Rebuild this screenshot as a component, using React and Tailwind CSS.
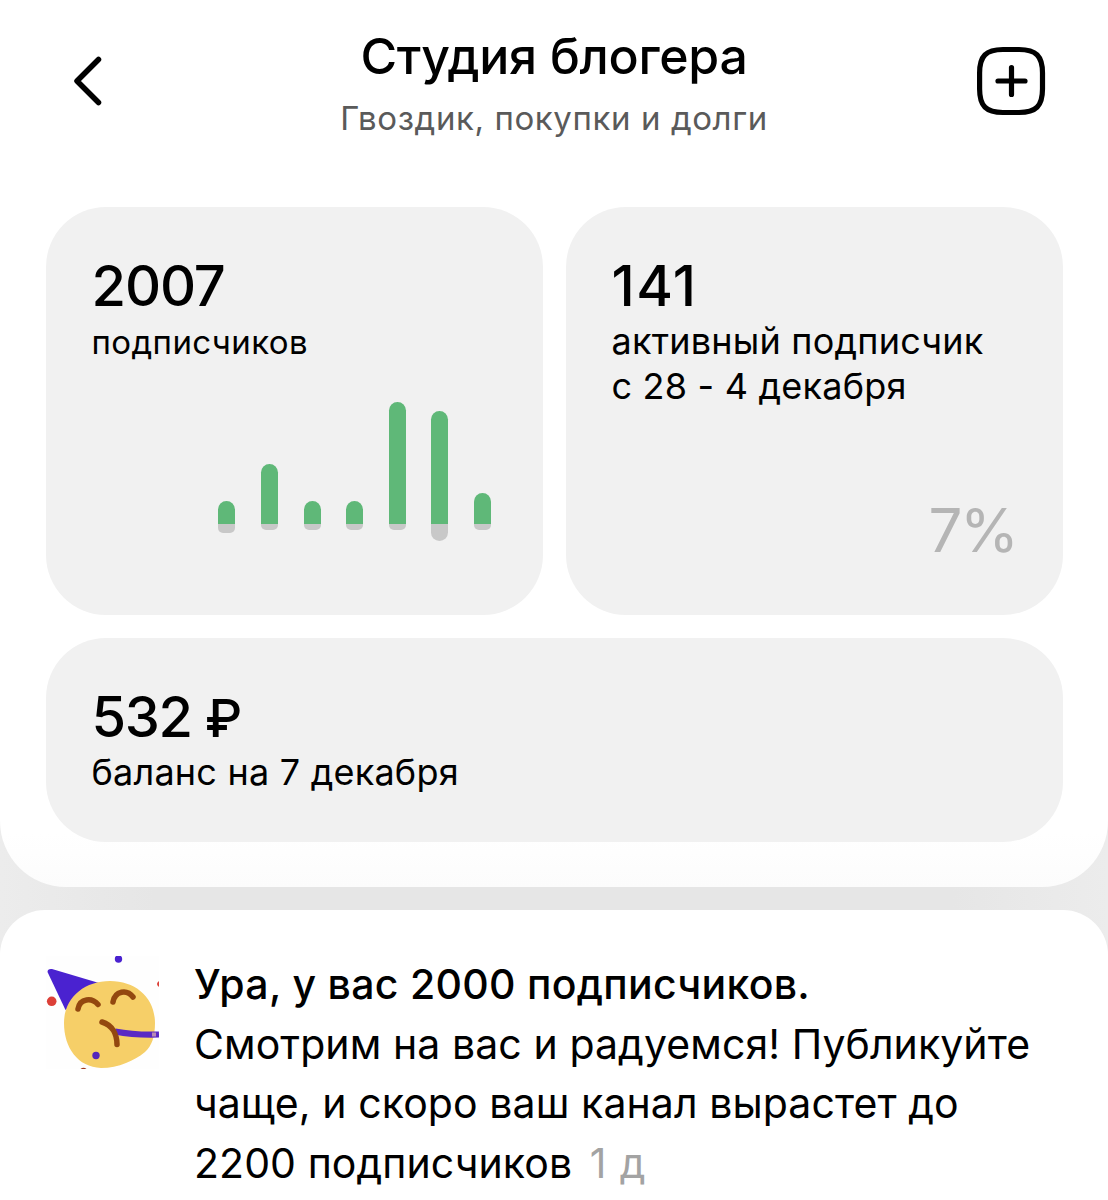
const days = [
  { up: 23, down: 9 },
  { up: 60, down: 6 },
  { up: 23, down: 6 },
  { up: 23, down: 6 },
  { up: 122, down: 6 },
  { up: 113, down: 17 },
  { up: 31, down: 6 },
];

const SubscribersChart = () => (
  <div className="flex gap-[25.6px] h-[140px] ml-auto mr-[5.5px]">
    {days.map((day, i) => (
      <div key={i} className="w-[17px] flex flex-col">
        <div className="h-[122px] flex items-end">
          <div className="w-full rounded-t-[8.5px] bg-[#5fb878]" style={{ height: day.up }}></div>
        </div>
        <div
          className={`w-full bg-[#c8c8c8] ${day.down > 12 ? 'rounded-b-[8.5px]' : 'rounded-b-[5px]'}`}
          style={{ height: day.down }}
        ></div>
      </div>
    ))}
  </div>
);

const PartyFace = () => (
  <svg viewBox="0 0 113 113" className="w-[113px] h-[113px] mt-px shrink-0" fill="none">
    <rect width="113" height="113" fill="#fefefe" />
    <path d="M1.500 16 Q1.500 12.500 6 13 L53 27 L19.500 54 Z" fill="#4a22d0" />
    <path
      d="M64 25 C90 25 109 42 109 67 C109 80 106 90 99 96 C93 101 87 104 80 107 C72 110.500 64 112 55 112 C32 111 18 92 18 67 C18 42 38 25 64 25 Z"
      fill="#f6cf68"
    />
    <g stroke="#93480f" strokeWidth="5.500" strokeLinecap="round">
      <path d="M32 53 C34 42 46 41.500 52 48.500" />
      <path d="M67 46 C69 34.500 81 33 87 41" />
    </g>
    <path d="M69 75.500 C82 78 98 79 113 78.500" stroke="#5a28c4" strokeWidth="6.200" />
    <rect x="106" y="76.500" width="4" height="4" fill="#b98ab5" />
    <path d="M56 66 C66 69 71 78 71 88.500" stroke="#93480f" strokeWidth="5.500" strokeLinecap="round" />
    <circle cx="72.500" cy="3" r="3.700" fill="#4a22d0" />
    <circle cx="50" cy="99.500" r="3.700" fill="#5526bb" />
    <circle cx="5.700" cy="45.300" r="4.800" fill="#dc4038" />
    <path d="M113 25 Q109 28 113 31 Z" fill="#dc4038" />
    <path d="M34.500 113 Q37.500 110.500 40.500 113 Z" fill="#a03a20" />
  </svg>
);

const Card = ({ value, label, valueClass = '', labelClass = 'text-[36px] tracking-[0.006em]', className = '', children }) => (
  <div className={`bg-[#f1f1f1] rounded-[60px] px-[46px] pt-[47px] flex flex-col ${className}`}>
    <div className={`h-16 text-[56px] leading-[64px] font-medium ${valueClass}`}>{value}</div>
    <div className={`leading-[45px] whitespace-pre-line mt-px ${labelClass}`}>{label}</div>
    {children}
  </div>
);

const App = () => {
  return (
    <div className="w-[1108px] h-[1200px] overflow-hidden bg-[linear-gradient(to_right,#ececec,#e6e6e6_14%,#e6e6e6_86%,#ececec)] font-['Inter',sans-serif] text-black">
      <div className="h-[887px] bg-linear-to-b from-white from-94% to-[#fcfcfc] rounded-b-[66px] px-[45.5px]">
        <header className="h-[207px] flex justify-between">
          <button className="w-[86px] h-[162px] pl-[27px] flex items-center">
            <svg width="30" height="50" viewBox="0 0 30 50" fill="none" stroke="currentColor" strokeWidth="5.500" strokeLinecap="round" strokeLinejoin="round">
              <path d="M25.500 3.500 L4 25 L25.500 46.500" />
            </svg>
          </button>
          <div className="pt-[26px] text-center whitespace-nowrap">
            <h1 className="text-[50px] leading-[60px] font-medium tracking-[-0.006em]">Студия блогера</h1>
            <p className="mt-3 text-[33px] leading-10 tracking-[0.018em] text-[#5a5a5a]">Гвоздик, покупки и долги</p>
          </div>
          <button className="w-[86px] h-[162px] flex items-center">
            <svg width="70" height="70" viewBox="0 0 70 70" fill="none" stroke="currentColor" strokeWidth="5.200" strokeLinecap="round">
              <path d="M26 3.500 H42 C59 3.500 65.500 10 65.500 27 V43 C65.500 60 59 66.500 42 66.500 H26 C9 66.500 2.600 60 2.600 43 V27 C2.600 10 9 3.500 26 3.500 Z" />
              <path d="M34.500 21.500 V48.500 M21 35 H48" />
            </svg>
          </button>
        </header>

        <div className="grid grid-cols-2 gap-[23px]">
          <Card
            value="2007"
            label="подписчиков"
            valueClass="tracking-[-0.02em]"
            labelClass="text-[33px] tracking-[0.012em] pt-px"
            className="h-[408px]"
          >
            <div className="flex mt-[37px]">
              <SubscribersChart />
            </div>
          </Card>
          <Card value="141" label={'активный подписчик\nс 28 - 4 декабря'} valueClass="tracking-[0.025em]" className="h-[408px]">
            <div className="mt-[83px] text-right text-[60px] leading-[76px] tracking-[-0.04em] text-[#b5b5b5]">7%</div>
          </Card>
          <Card
            value={<>532 <span className="text-[52px]">₽</span></>}
            label="баланс на 7 декабря"
            valueClass="tracking-[-0.025em]"
            className="col-span-2 h-[204px]"
          />
        </div>
      </div>

      <div className="mt-[23px] h-[320px] bg-white rounded-t-[45px] pt-[45px] px-[46px] flex gap-[35px]">
        <PartyFace />
        <div className="text-[41px] leading-[59.7px] tracking-[0.002em] whitespace-nowrap">
          <div className="font-medium tracking-[0.007em]">Ура, у вас 2000 подписчиков.</div>
          <div>Смотрим на вас и радуемся! Публикуйте</div>
          <div>чаще, и скоро ваш канал вырастет до</div>
          <div>
            2200 подписчиков <span className="ml-[6px] tracking-[0.02em] text-[#a3a3a3]">1 д</span>
          </div>
        </div>
      </div>
    </div>
  );
};

export default App;
